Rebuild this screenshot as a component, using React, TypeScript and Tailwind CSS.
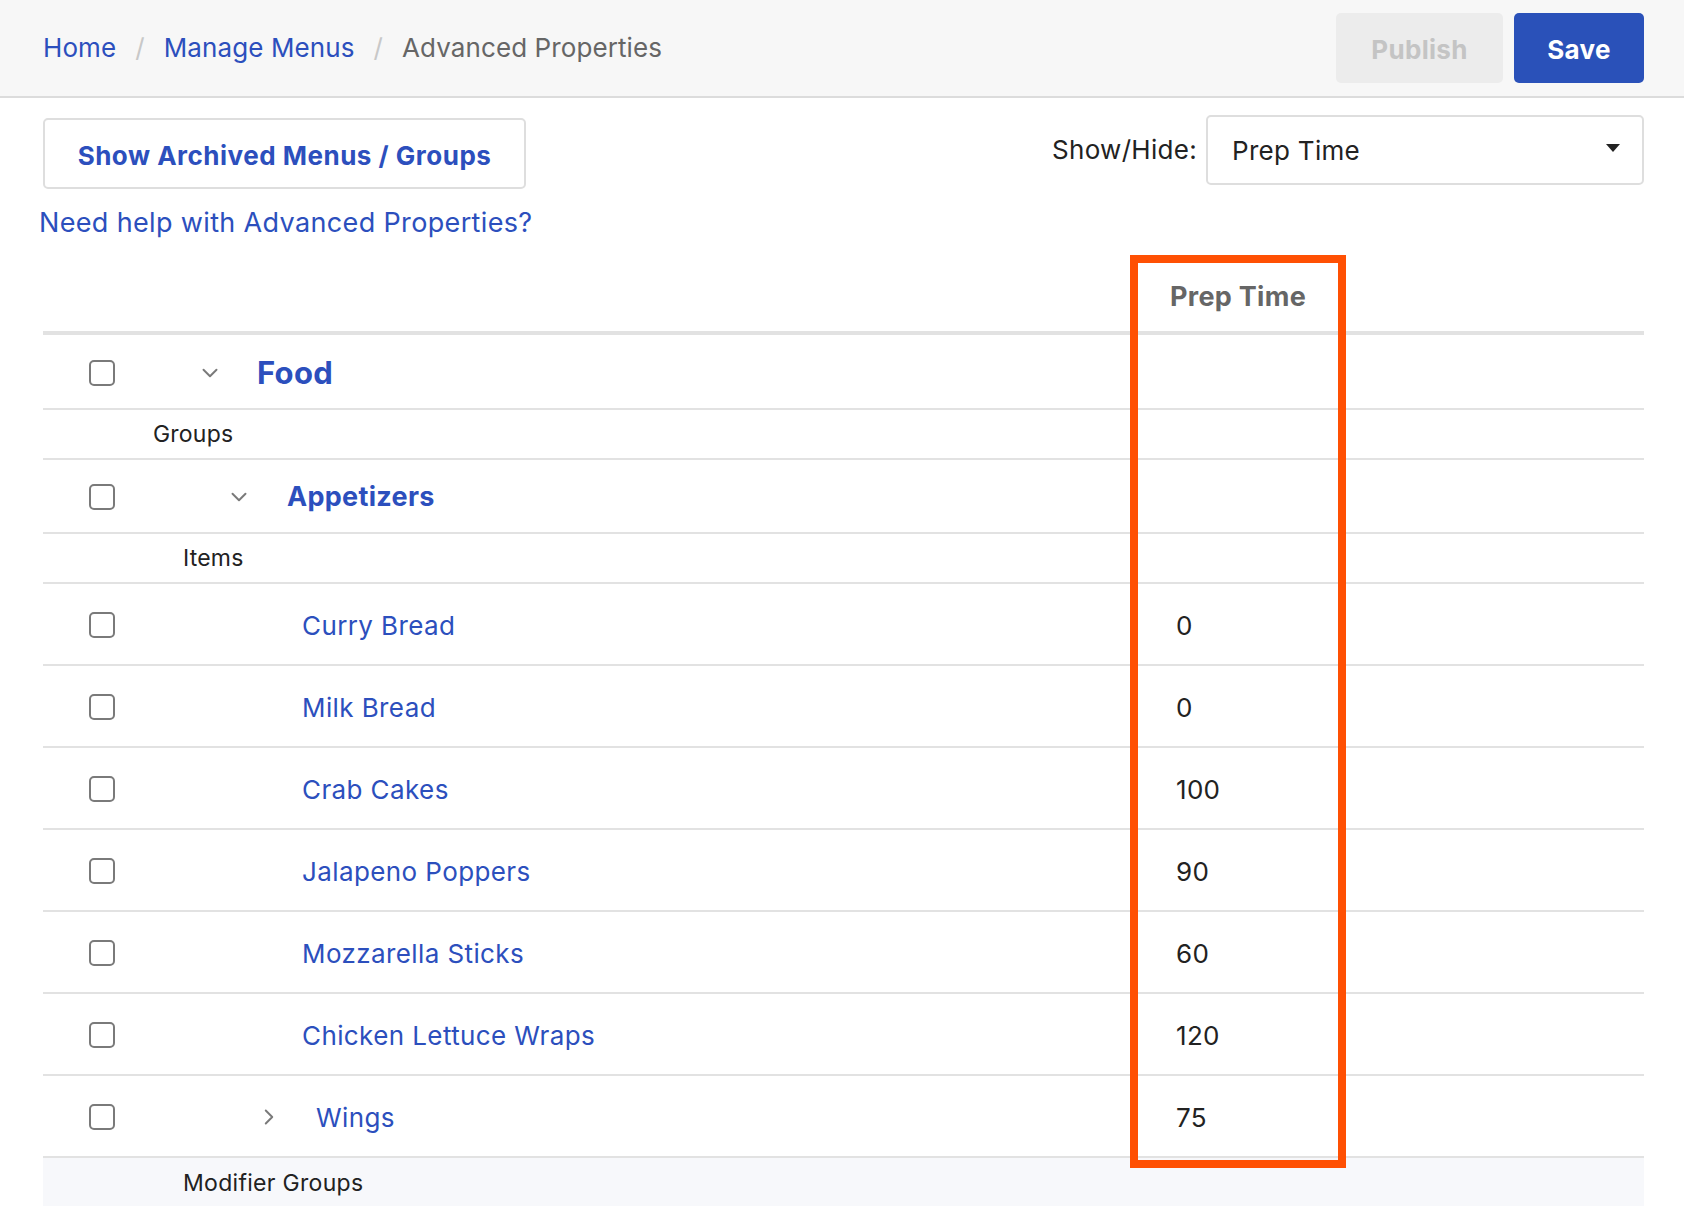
import { ChevronDown, ChevronRight } from "lucide-react";

type Item = { name: string; prep: string; expandable?: boolean };

const items: Item[] = [
  { name: "Curry Bread", prep: "0" },
  { name: "Milk Bread", prep: "0" },
  { name: "Crab Cakes", prep: "100" },
  { name: "Jalapeno Poppers", prep: "90" },
  { name: "Mozzarella Sticks", prep: "60" },
  { name: "Chicken Lettuce Wraps", prep: "120" },
  { name: "Wings", prep: "75", expandable: true },
];

function Checkbox() {
  return <span className="block w-[26px] h-[26px] shrink-0 rounded-[5px] border-2 border-[#7a7a7a] bg-white" />;
}

export default function App() {
  return (
    <div className="min-h-screen bg-white text-[#222] font-['Inter','Liberation_Sans',sans-serif]">
      {/* Header */}
      <header className="h-[98px] bg-[#f7f7f7] border-b-2 border-[#dcdcdc] flex items-start justify-between pl-[43px] pr-[40px]">
        <nav className="flex items-center gap-[19px] text-[26px] tracking-[0.1px] h-[98px] pb-[3px]">
          <a className="text-[#2c4fbd]">Home</a>
          <span className="text-[#c8c8c8]">/</span>
          <a className="text-[#2c4fbd]">Manage Menus</a>
          <span className="text-[#c8c8c8]">/</span>
          <span className="text-[#666]">Advanced Properties</span>
        </nav>
        <div className="flex gap-[11px] pt-[13px]">
          <button className="h-[70px] w-[167px] rounded-[5px] bg-[#ececec] text-[#c4c4c4] text-[26px] font-bold pt-[3px] tracking-[0.3px]">
            Publish
          </button>
          <button className="h-[70px] w-[130px] rounded-[5px] bg-[#2a51b9] text-white text-[26px] font-bold pt-[3px] tracking-[0.3px]">
            Save
          </button>
        </div>
      </header>

      <main className="pl-[43px] pr-[40px]">
        {/* Toolbar */}
        <div className="flex items-start justify-between mt-[17px]">
          <button className="mt-[3px] h-[71px] w-[483px] rounded-[5px] border-2 border-[#dedede] bg-white text-[#2c4fbd] text-[26px] tracking-[0.5px] font-bold pt-[3px]">
            Show Archived Menus / Groups
          </button>
          <div className="flex items-center gap-[9px]">
            <span className="text-[26px] tracking-[0.3px] text-[#222] pb-[2px]">Show/Hide:</span>
            <div className="h-[70px] w-[438px] rounded-[5px] border-2 border-[#dedede] bg-white flex items-center justify-between pl-[24px] pr-[22px]">
              <span className="text-[26px] tracking-[0.3px] text-[#222]">Prep Time</span>
              <span className="w-0 h-0 border-l-[7px] border-r-[7px] border-t-[8px] border-l-transparent border-r-transparent border-t-[#222] mb-[4px]" />
            </div>
          </div>
        </div>
        <a className="block mt-[17px] -ml-[4px] text-[27px] tracking-[0.35px] leading-[34px] text-[#2c4fbd]">
          Need help with Advanced Properties?
        </a>

        {/* Table */}
        <div className="relative">
          <div className="flex h-[95px] border-b-4 border-[#e2e2e2]">
            <div className="flex-1" />
            <div className="w-[216px] pt-[40px] text-center text-[27px] tracking-[0.3px] leading-[34px] font-bold text-[#666]">Prep Time</div>
            <div className="w-[298px]" />
          </div>

          <div className="flex items-center h-[75px] border-b-2 border-[#e2e2e2] pt-[3px]">
            <div className="flex-1 flex items-center pl-[46px]">
              <Checkbox />
              <ChevronDown className="ml-[82px] w-[26px] h-[26px] text-[#7a7a7a]" strokeWidth={1.8} />
              <span className="ml-[34px] text-[31px] tracking-[0.3px] font-bold text-[#2c4fbd]">Food</span>
            </div>
            <div className="w-[216px]" />
            <div className="w-[298px]" />
          </div>

          <div className="flex items-center h-[50px] border-b-2 border-[#e2e2e2] pl-[110px] text-[23px] tracking-[0.2px]">Groups</div>

          <div className="flex items-center h-[74px] border-b-2 border-[#e2e2e2] pt-[2px]">
            <div className="flex-1 flex items-center pl-[46px]">
              <Checkbox />
              <ChevronDown className="ml-[111px] w-[26px] h-[26px] text-[#7a7a7a]" strokeWidth={1.8} />
              <span className="ml-[35px] text-[27px] tracking-[0.3px] font-bold text-[#2c4fbd]">Appetizers</span>
            </div>
            <div className="w-[216px]" />
            <div className="w-[298px]" />
          </div>

          <div className="flex items-center h-[50px] border-b-2 border-[#e2e2e2] pl-[140px] text-[23px] tracking-[0.2px]">Items</div>

          {items.map((item) => (
            <div key={item.name} className="flex items-center h-[82px] border-b-2 border-[#e2e2e2] pt-[2px]">
              <div className="flex-1 flex items-center pl-[46px]">
                <Checkbox />
                {item.expandable ? (
                  <>
                    <ChevronRight className="ml-[141px] w-[26px] h-[26px] text-[#7a7a7a]" strokeWidth={1.8} />
                    <span className="ml-[34px] text-[26px] tracking-[0.4px] text-[#2c4fbd]">{item.name}</span>
                  </>
                ) : (
                  <span className="ml-[187px] text-[26px] tracking-[0.4px] text-[#2c4fbd]">{item.name}</span>
                )}
              </div>
              <div className="w-[216px] pl-[46px] text-[26px] tracking-[0.3px] text-[#222]">{item.prep}</div>
              <div className="w-[298px]" />
            </div>
          ))}

          <div className="flex items-center h-[60px] bg-[#f7f8fb] pl-[140px] text-[23px] tracking-[0.3px] pb-[10px]">Modifier Groups</div>

          {/* Highlight annotation over the Prep Time column */}
          <div className="absolute top-[15px] right-[298px] w-[216px] h-[913px] border-[8px] border-[#ff5003] pointer-events-none" />
        </div>
      </main>
    </div>
  );
}
